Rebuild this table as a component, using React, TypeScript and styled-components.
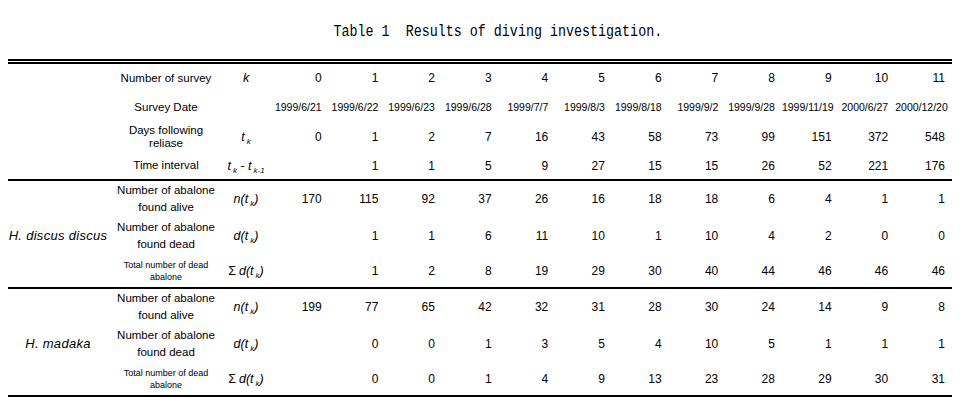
import React from "react";
import styled, { createGlobalStyle } from "styled-components";

const Global = createGlobalStyle`
  html, body { margin: 0; padding: 0; background: #fff; }
  body { font-family: "Liberation Sans", Arial, sans-serif; color: #000; }
`;

const Page = styled.div`
  width: 963px;
  padding: 0 0 0 8px;
  box-sizing: border-box;
`;

const TitleBar = styled.div`
  height: 59px;
  padding: 22px 0 0 36px;
  box-sizing: border-box;
  text-align: center;
  width: 944px;
`;

const TitleText = styled.span`
  display: inline-block;
  font-family: "Liberation Mono", "DejaVu Sans Mono", monospace;
  font-size: 16px;
  line-height: 18px;
  white-space: pre;
  transform: scaleX(0.835);
  transform-origin: center;
`;

const DoubleRule = styled.div`
  width: 944px;
  height: 1px;
  border-top: 2px solid #000;
  border-bottom: 2px solid #000;
`;

const Table = styled.table`
  width: 944px;
  border-collapse: collapse;
  table-layout: fixed;
`;

const Section = styled.tbody`
  border-bottom: 2px solid #000;
`;

const Row = styled.tr<{ $h: number }>`
  height: ${(p) => p.$h}px;
`;

const GroupCell = styled.td`
  padding: 0 4px 0 0;
  text-align: center;
  vertical-align: middle;
  font-style: italic;
  font-size: 13px;
  letter-spacing: 0.3px;
`;

const DescCell = styled.td<{ $small?: boolean; $lh?: number }>`
  padding: 0;
  text-align: center;
  vertical-align: middle;
  font-size: ${(p) => (p.$small ? "9px" : "11.5px")};
  line-height: ${(p) => (p.$lh ? p.$lh : p.$small ? 12 : 17)}px;
`;

const SymCell = styled.td`
  padding: 0;
  text-align: center;
  vertical-align: middle;
  font-size: 12.5px;
  line-height: 14px;
  font-style: italic;
  white-space: nowrap;
`;

const Upright = styled.span`
  font-style: normal;
  margin-right: 3px;
`;

const Sub = styled.sub`
  font-size: 8px;
  line-height: 0;
  vertical-align: -3px;
  margin-left: 2px;
`;

const ValCell = styled.td`
  padding: 0 7px 0 0;
  text-align: right;
  vertical-align: middle;
  font-size: 12px;
  white-space: nowrap;
`;

const DateCell = styled.td`
  padding: 0 7px 0 0;
  text-align: right;
  vertical-align: middle;
  font-size: 10.5px;
  white-space: nowrap;
  overflow: visible;
`;

const Tk = () => (
  <>
    t<Sub>k</Sub>
  </>
);

const surveys = ["0", "1", "2", "3", "4", "5", "6", "7", "8", "9", "10", "11"];
const dates = [
  "1999/6/21",
  "1999/6/22",
  "1999/6/23",
  "1999/6/28",
  "1999/7/7",
  "1999/8/3",
  "1999/8/18",
  "1999/9/2",
  "1999/9/28",
  "1999/11/19",
  "2000/6/27",
  "2000/12/20",
];
const days = ["0", "1", "2", "7", "16", "43", "58", "73", "99", "151", "372", "548"];
const intervals = ["", "1", "1", "5", "9", "27", "15", "15", "26", "52", "221", "176"];

const groups = [
  {
    name: "H. discus discus",
    alive: ["170", "115", "92", "37", "26", "16", "18", "18", "6", "4", "1", "1"],
    dead: ["", "1", "1", "6", "11", "10", "1", "10", "4", "2", "0", "0"],
    total: ["", "1", "2", "8", "19", "29", "30", "40", "44", "46", "46", "46"],
  },
  {
    name: "H. madaka",
    alive: ["199", "77", "65", "42", "32", "31", "28", "30", "24", "14", "9", "8"],
    dead: ["", "0", "0", "1", "3", "5", "4", "10", "5", "1", "1", "1"],
    total: ["", "0", "0", "1", "4", "9", "13", "23", "28", "29", "30", "31"],
  },
];

const Values = ({ items }: { items: string[] }) => (
  <>
    {items.map((v, i) => (
      <ValCell key={i}>{v}</ValCell>
    ))}
  </>
);

export default function App() {
  return (
    <Page>
      <Global />
      <TitleBar>
        <TitleText>{"Table 1  Results of diving investigation."}</TitleText>
      </TitleBar>
      <DoubleRule />
      <Table>
        <colgroup>
          <col style={{ width: 104 }} />
          <col style={{ width: 108 }} />
          <col style={{ width: 52 }} />
          {surveys.map((s) => (
            <col key={s} style={{ width: 56.67 }} />
          ))}
        </colgroup>
        <Section>
          <Row $h={28}>
            <GroupCell />
            <DescCell>Number of survey</DescCell>
            <SymCell>k</SymCell>
            <Values items={surveys} />
          </Row>
          <Row $h={30}>
            <GroupCell />
            <DescCell>Survey Date</DescCell>
            <SymCell />
            {dates.map((d) => (
              <DateCell key={d}>{d}</DateCell>
            ))}
          </Row>
          <Row $h={30}>
            <GroupCell />
            <DescCell $lh={13}>
              Days following
              <br />
              reliase
            </DescCell>
            <SymCell>
              <Tk />
            </SymCell>
            <Values items={days} />
          </Row>
          <Row $h={28}>
            <GroupCell />
            <DescCell>Time interval</DescCell>
            <SymCell>
              t<Sub>k</Sub> - t<Sub>k-1</Sub>
            </SymCell>
            <Values items={intervals} />
          </Row>
        </Section>
        {groups.map((g) => (
          <Section key={g.name}>
            <Row $h={36}>
              <GroupCell />
              <DescCell>
                Number of abalone
                <br />
                found alive
              </DescCell>
              <SymCell>
                n(<Tk />)
              </SymCell>
              <Values items={g.alive} />
            </Row>
            <Row $h={39}>
              <GroupCell>{g.name}</GroupCell>
              <DescCell>
                Number of abalone
                <br />
                found dead
              </DescCell>
              <SymCell>
                d(<Tk />)
              </SymCell>
              <Values items={g.dead} />
            </Row>
            <Row $h={33}>
              <GroupCell />
              <DescCell $small>
                Total number of dead
                <br />
                abalone
              </DescCell>
              <SymCell>
                <Upright>Σ</Upright>d(<Tk />)
              </SymCell>
              <Values items={g.total} />
            </Row>
          </Section>
        ))}
      </Table>
    </Page>
  );
}
